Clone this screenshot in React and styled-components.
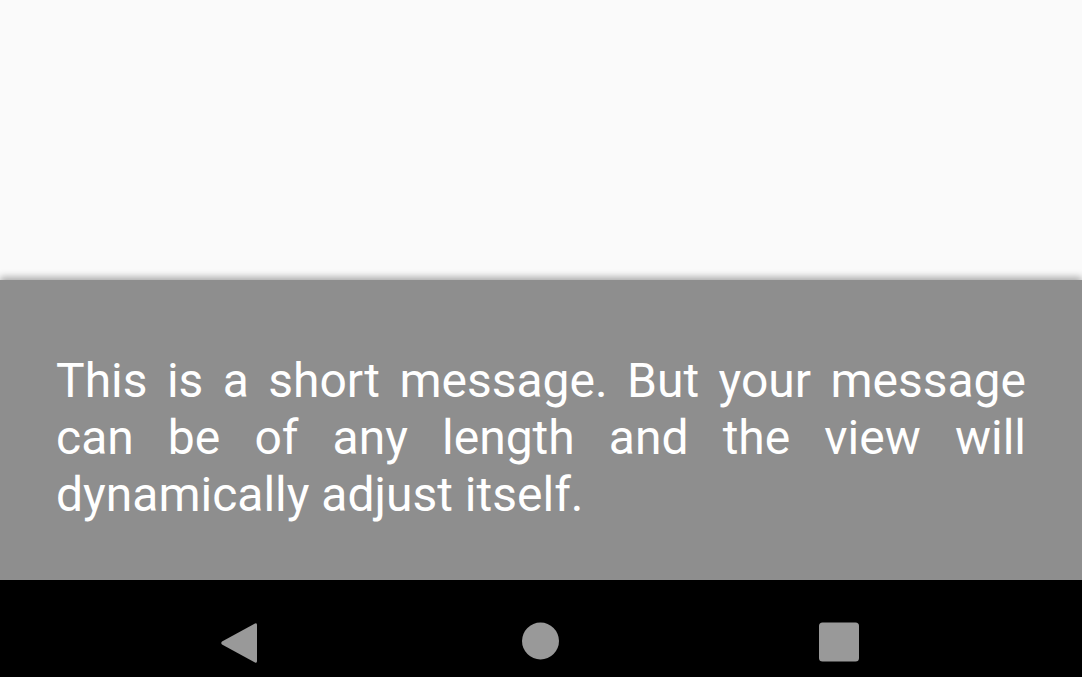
import React from "react";
import styled, { createGlobalStyle } from "styled-components";

const Global = createGlobalStyle`
  html, body { margin: 0; padding: 0; height: 100%; }
  body { background: #fafafa; font-family: Roboto, "Noto Sans", sans-serif; }
  #root { height: 100%; }
`;

const Screen = styled.div`
  height: 677px;
  display: flex;
  flex-direction: column;
  overflow: hidden;
`;

const Content = styled.div`
  flex: 1;
  background: #fafafa;
`;

const Panel = styled.div`
  position: relative;
  height: 300px;
  box-sizing: border-box;
  background: #8e8e8e;
  padding: 72px 56px 0 56px;
  box-shadow: 0 -3px 7px rgba(0, 0, 0, 0.32);
`;

const Message = styled.p`
  margin: 0;
  color: #ffffff;
  font-family: Roboto, sans-serif;
  font-size: 48px;
  line-height: 57px;
  text-align: justify;
`;

const NavBar = styled.div`
  height: 97px;
  background: #000000;
  display: grid;
  grid-template-columns: repeat(3, 300px);
  justify-content: center;
  align-items: start;
  padding-top: 42px;
  box-sizing: border-box;
`;

const NavButton = styled.div`
  display: flex;
  justify-content: center;
  margin-left: ${(p) => p.$shift || 0}px;
`;

const Back = () => (
  <svg width="38" height="42" viewBox="0 0 38 42">
    <path
      d="M35 1.5 Q37 0.5 37 3 L37 39 Q37 41.5 35 40.5 L2 22.5 Q0.5 21 2 19.5 Z"
      fill="#999999"
    />
  </svg>
);

const Home = () => (
  <svg width="38" height="38" viewBox="0 0 38 38">
    <circle cx="18.5" cy="19" r="18.5" fill="#999999" />
  </svg>
);

const Recents = () => (
  <svg width="40" height="40" viewBox="0 0 40 40">
    <rect x="0" y="0.5" width="40" height="39" rx="3.5" fill="#999999" />
  </svg>
);

export default function App() {
  return (
    <>
      <Global />
      <Screen>
        <Content />
        <Panel>
          <Message>
            This is a short message. But your message can be of any length and
            the view will dynamically adjust itself.
          </Message>
        </Panel>
        <NavBar>
          <NavButton $shift={-4}>
            <Back />
          </NavButton>
          <NavButton>
            <Home />
          </NavButton>
          <NavButton $shift={-4}>
            <Recents />
          </NavButton>
        </NavBar>
      </Screen>
    </>
  );
}
